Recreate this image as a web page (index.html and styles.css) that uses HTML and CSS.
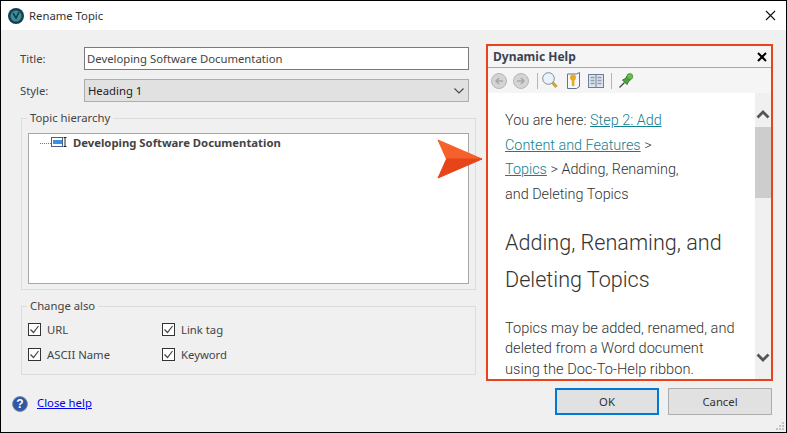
FILE: index.html
```html
<!DOCTYPE html>
<html lang="en">
<head>
  <meta charset="UTF-8" />
  <title>Rename Topic</title>
  <link rel="stylesheet" href="styles.css">
</head>
<body>
  <div class="dialog">
    <div class="titlebar">
      <svg class="app-icon" width="16" height="16" viewBox="0 0 16 16">
        <circle cx="8" cy="8" r="8" fill="#123f5c"/>
        <circle cx="8" cy="8" r="5.5" fill="#3f8f8c"/>
        <path d="M5 5l3 5 3-6" fill="none" stroke="#0f3a52" stroke-width="1.6"/>
      </svg>
      <span class="title-text">Rename Topic</span>
      <svg class="close-icon" width="11" height="11" viewBox="0 0 11 11">
        <path d="M1 1l9 9M10 1l-9 9" stroke="#111" stroke-width="1.1"/>
      </svg>
    </div>

    <div class="content">
      <div class="left">
        <div class="form-row">
          <label>Title:</label>
          <div class="text-input">Developing Software Documentation</div>
        </div>
        <div class="form-row">
          <label>Style:</label>
          <div class="select-box">
            <span>Heading 1</span>
            <svg width="10" height="6" viewBox="0 0 10 6"><path d="M0.5 0.5L5 5l4.500-4.500" fill="none" stroke="#444" stroke-width="1.100"/></svg>
          </div>
        </div>

        <div class="group hierarchy">
          <span class="group-label">Topic hierarchy</span>
          <div class="tree">
            <span class="tree-dots"></span>
            <svg class="tree-icon" width="16" height="11" viewBox="0 0 16 11">
              <rect x="0.500" y="0.500" width="11" height="9" fill="#fff" stroke="#44608a"/>
              <rect x="2" y="3" width="9" height="4" fill="#3d8ee6"/>
              <path d="M12.500 0.500h3M14 0.500v9M12.500 9.500h3" fill="none" stroke="#222"/>
            </svg>
            <b>Developing Software Documentation</b>
          </div>
        </div>

        <div class="group change-also">
          <span class="group-label">Change also</span>
          <div class="checks">
            <div class="check"><span class="box"><svg width="11" height="11" viewBox="0 0 11 11"><path d="M1.500 5.500l3 3 5-6.500" fill="none" stroke="#444" stroke-width="1.200"/></svg></span>URL</div>
            <div class="check"><span class="box"><svg width="11" height="11" viewBox="0 0 11 11"><path d="M1.500 5.500l3 3 5-6.500" fill="none" stroke="#444" stroke-width="1.200"/></svg></span>Link tag</div>
            <div class="check"><span class="box"><svg width="11" height="11" viewBox="0 0 11 11"><path d="M1.500 5.500l3 3 5-6.500" fill="none" stroke="#444" stroke-width="1.200"/></svg></span>ASCII Name</div>
            <div class="check"><span class="box"><svg width="11" height="11" viewBox="0 0 11 11"><path d="M1.500 5.500l3 3 5-6.500" fill="none" stroke="#444" stroke-width="1.200"/></svg></span>Keyword</div>
          </div>
        </div>
      </div>

      <div class="help-panel">
        <div class="help-head">
          <b>Dynamic Help</b>
          <svg width="10" height="10" viewBox="0 0 10 10"><path d="M1 1l8 8M9 1l-8 8" stroke="#000" stroke-width="2"/></svg>
        </div>
        <div class="help-tools">
          <svg width="16" height="16" viewBox="0 0 16 16"><circle cx="8" cy="8" r="7.500" fill="#d4d4d4" stroke="#b5b5b5"/><path d="M12 8H5M8 5L5 8l3 3" fill="none" stroke="#a8a8a8" stroke-width="1.500"/></svg>
          <svg class="gap-tool" width="16" height="16" viewBox="0 0 16 16"><circle cx="8" cy="8" r="7.500" fill="#d4d4d4" stroke="#b5b5b5"/><path d="M4 8h7M8 5l3 3-3 3" fill="none" stroke="#a8a8a8" stroke-width="1.500"/></svg>
          <span class="tool-sep first-sep"></span>
          <svg width="16" height="17" viewBox="0 0 16 17"><path d="M10 10l4.500 5" stroke="#c9a53a" stroke-width="3.200"/><circle cx="6.500" cy="6.500" r="5.800" fill="#eaf3fc" stroke="#7f8b99"/></svg>
          <svg class="key-tool" width="13" height="17" viewBox="0 0 13 17"><path d="M0.500 2h9l3-1.500v14l-3 2h-9z" fill="#f4f7fb" stroke="#5d7394"/><circle cx="6" cy="5.500" r="3" fill="#e6ac1e"/><path d="M4.800 7h2.600v7H4.800z" fill="#e6ac1e"/></svg>
          <svg class="book-tool" width="16" height="14" viewBox="0 0 16 14"><rect x="0.500" y="0.500" width="15" height="13" fill="#dfe5ee" stroke="#6e7f95"/><path d="M8 1v12" stroke="#6e7f95"/><path d="M2.500 3.500h4M2.500 6.500h4M2.500 9.500h4M9.500 3.500h4M9.500 6.500h4M9.500 9.500h4" stroke="#8e9db0" stroke-width="1.500"/></svg>
          <span class="tool-sep second-sep"></span>
          <svg width="15" height="15" viewBox="0 0 15 15"><path d="M0.500 14.500l5-5" stroke="#444" stroke-width="1.200"/><path d="M3.500 7l4.500 4.500 1.500-3 2-1.500-3.500-4-1.500 2.500z" fill="#4ea23e" stroke="#2f7a2a"/><circle cx="10.800" cy="3.500" r="3" fill="#6cbc52" stroke="#2f7a2a" stroke-width="0.600"/></svg>
        </div>
        <div class="help-body">
          <div class="help-text">
            <p class="crumbs">You are here: <a>Step 2: Add<br>Content and Features</a> &gt;<br><a>Topics</a> &gt; Adding, Renaming,<br>and Deleting Topics</p>
            <h1>Adding, Renaming, and<br>Deleting Topics</h1>
            <p class="para">Topics may be added, renamed, and<br>deleted from a Word document<br>using the Doc-To-Help ribbon.</p>
          </div>
          <div class="scrollbar">
            <svg width="14" height="9" viewBox="0 0 14 9"><path d="M1.500 7.500L7 2l5.500 5.500" fill="none" stroke="#555" stroke-width="2.800"/></svg>
            <div class="thumb"></div>
            <svg class="scroll-down" width="14" height="9" viewBox="0 0 14 9"><path d="M1.500 1.500L7 7l5.500-5.500" fill="none" stroke="#555" stroke-width="2.800"/></svg>
          </div>
        </div>
      </div>
    </div>

    <div class="footer">
      <svg width="16" height="16" viewBox="0 0 16 16"><circle cx="8" cy="8" r="7.500" fill="#2f56a8" stroke="#8a93a3"/><text x="8" y="12" text-anchor="middle" class="help-mark">?</text></svg>
      <a class="close-help">Close help</a>
      <button class="btn btn-ok">OK</button>
      <button class="btn">Cancel</button>
    </div>

    <svg class="callout" width="46" height="40" viewBox="0 0 46 40">
      <path d="M1 1L45 20H9.500z" fill="#f5602b" stroke="#f5602b" stroke-linejoin="round"/>
      <path d="M9.500 20H45L1 39z" fill="#e8441a" stroke="#e8441a" stroke-linejoin="round"/>
    </svg>

    <svg class="grip" width="10" height="10" viewBox="0 0 10 10">
      <path d="M7 1h2v2H7zM4 4h2v2H4zM7 4h2v2H7zM1 7h2v2H1zM4 7h2v2H4zM7 7h2v2H7z" fill="#c4c4c4"/>
    </svg>
  </div>
</body>
</html>
```

FILE: styles.css
```css
* {
  box-sizing: border-box;
}

body {
  margin: 0;
  font-family: "Noto Sans", "Open Sans", sans-serif;
  font-size: 11.3px;
  color: #444;
}

.dialog {
  position: relative;
  width: 787px;
  height: 433px;
  display: flex;
  flex-direction: column;
  background: #f0f0f0;
  border: 1px solid #000;
  overflow: hidden;
}

.titlebar {
  height: 29px;
  flex-shrink: 0;
  display: flex;
  align-items: center;
  padding: 0 10px 0 7px;
  background: #fff;
  color: #333;
}

.title-text {
  margin-left: 5px;
  flex: 1;
}

.content {
  display: flex;
  height: 351px;
  padding: 14px 13px 0 20px;
}

.left {
  width: 456px;
  flex-shrink: 0;
  padding-top: 3px;
}

.form-row {
  display: flex;
  align-items: center;
  margin-bottom: 9px;
  height: 23px;
}

.form-row label {
  width: 64px;
  margin-left: -1px;
}

.text-input,
.select-box {
  width: 385px;
  height: 23px;
  display: flex;
  align-items: center;
  padding-left: 2px;
  background: #fff;
  border: 1px solid #7a7a7a;
}

.select-box {
  justify-content: space-between;
  padding: 0 4px 0 3px;
  background: #e1e1e1;
  border-color: #adadad;
  color: #222;
}

.group {
  position: relative;
  width: 455px;
  border: 1px solid #dcdcdc;
  padding: 0 6px;
}

.group-label {
  position: absolute;
  top: -9px;
  left: 5px;
  padding: 0 3px;
  background: #f0f0f0;
  line-height: 16px;
}

.hierarchy {
  height: 172px;
  margin-top: 16px;
  padding-top: 14px;
}

.tree {
  display: flex;
  align-items: flex-start;
  height: 151px;
  padding: 1px 0 0 11px;
  background: #fff;
  border: 1px solid #a8a8a8;
}

.tree-dots {
  width: 11px;
  margin-top: 8px;
  border-top: 1px dotted #777;
}

.tree-icon {
  margin: 2px 6px 0 0;
}

.change-also {
  height: 69px;
  margin-top: 16px;
}

.checks {
  display: grid;
  grid-template-columns: 134px 1fr;
  row-gap: 7px;
  padding-top: 13px;
}

.check {
  display: flex;
  align-items: center;
  height: 18px;
}

.box {
  width: 13px;
  height: 13px;
  margin-right: 6px;
  display: flex;
  align-items: center;
  justify-content: center;
  background: #fff;
  border: 1px solid #333;
}

.help-panel {
  width: 287px;
  height: 337px;
  margin-left: 9px;
  display: flex;
  flex-direction: column;
  border: 2px solid #e8431a;
  background: #f5f5f5;
}

.help-head {
  height: 22px;
  flex-shrink: 0;
  display: flex;
  align-items: center;
  justify-content: space-between;
  padding: 0 4px 0 5px;
  border-bottom: 1px solid #a9a9a9;
  color: #3c4252;
  font-size: 12px;
}

.help-tools {
  height: 25px;
  flex-shrink: 0;
  display: flex;
  align-items: center;
  padding-left: 3px;
}

.gap-tool {
  margin-left: 6px;
}

.tool-sep {
  width: 1px;
  height: 16px;
  background: #b5b5b5;
}

.first-sep {
  margin: 0 4px 0 8px;
}

.second-sep {
  margin: 0 7px;
}

.key-tool {
  margin-left: 9px;
}

.book-tool {
  margin-left: 8px;
}

.help-body {
  flex: 1;
  display: flex;
  min-height: 0;
  background: #fff;
}

.help-text {
  flex: 1;
  overflow: hidden;
  padding: 16px 0 0 17px;
  font-family: Roboto, sans-serif;
  font-weight: 300;
  font-size: 14.4px;
  color: #333;
}

.crumbs {
  margin: 0;
  line-height: 24.700px;
}

.help-text a {
  color: #14808f;
  text-decoration: underline;
}

.help-text h1 {
  margin: 16px 0 0;
  font-size: 21.6px;
  font-weight: 300;
  line-height: 37px;
}

.para {
  margin: 20px 0 0;
  font-size: 14.6px;
  line-height: 20.500px;
}

.scrollbar {
  width: 16px;
  flex-shrink: 0;
  display: flex;
  flex-direction: column;
  align-items: center;
  padding-top: 17px;
  background: #f0f0f0;
}

.thumb {
  width: 16px;
  height: 71px;
  margin-top: 8px;
  background: #cdcdcd;
}

.scroll-down {
  margin-top: auto;
  margin-bottom: 17px;
}

.footer {
  flex: 1;
  display: flex;
  align-items: flex-start;
  padding: 7px 14px 0 11px;
}

.footer > svg {
  margin-top: 8px;
}

.help-mark {
  font-family: "Liberation Sans", sans-serif;
  font-size: 12px;
  font-weight: bold;
  fill: #fff;
}

.close-help {
  margin: 7px 0 0 9px;
  color: #0000ee;
  text-decoration: underline;
}

.btn {
  width: 104px;
  height: 27px;
  margin-left: 9px;
  font-family: inherit;
  font-size: 11.3px;
  color: #333;
  background: #e1e1e1;
  border: 1px solid #adadad;
}

.btn-ok {
  margin-left: auto;
  border: 2px solid #0078d7;
}

.callout {
  position: absolute;
  left: 436px;
  top: 138px;
}

.grip {
  position: absolute;
  right: 1px;
  bottom: 1px;
}
```
